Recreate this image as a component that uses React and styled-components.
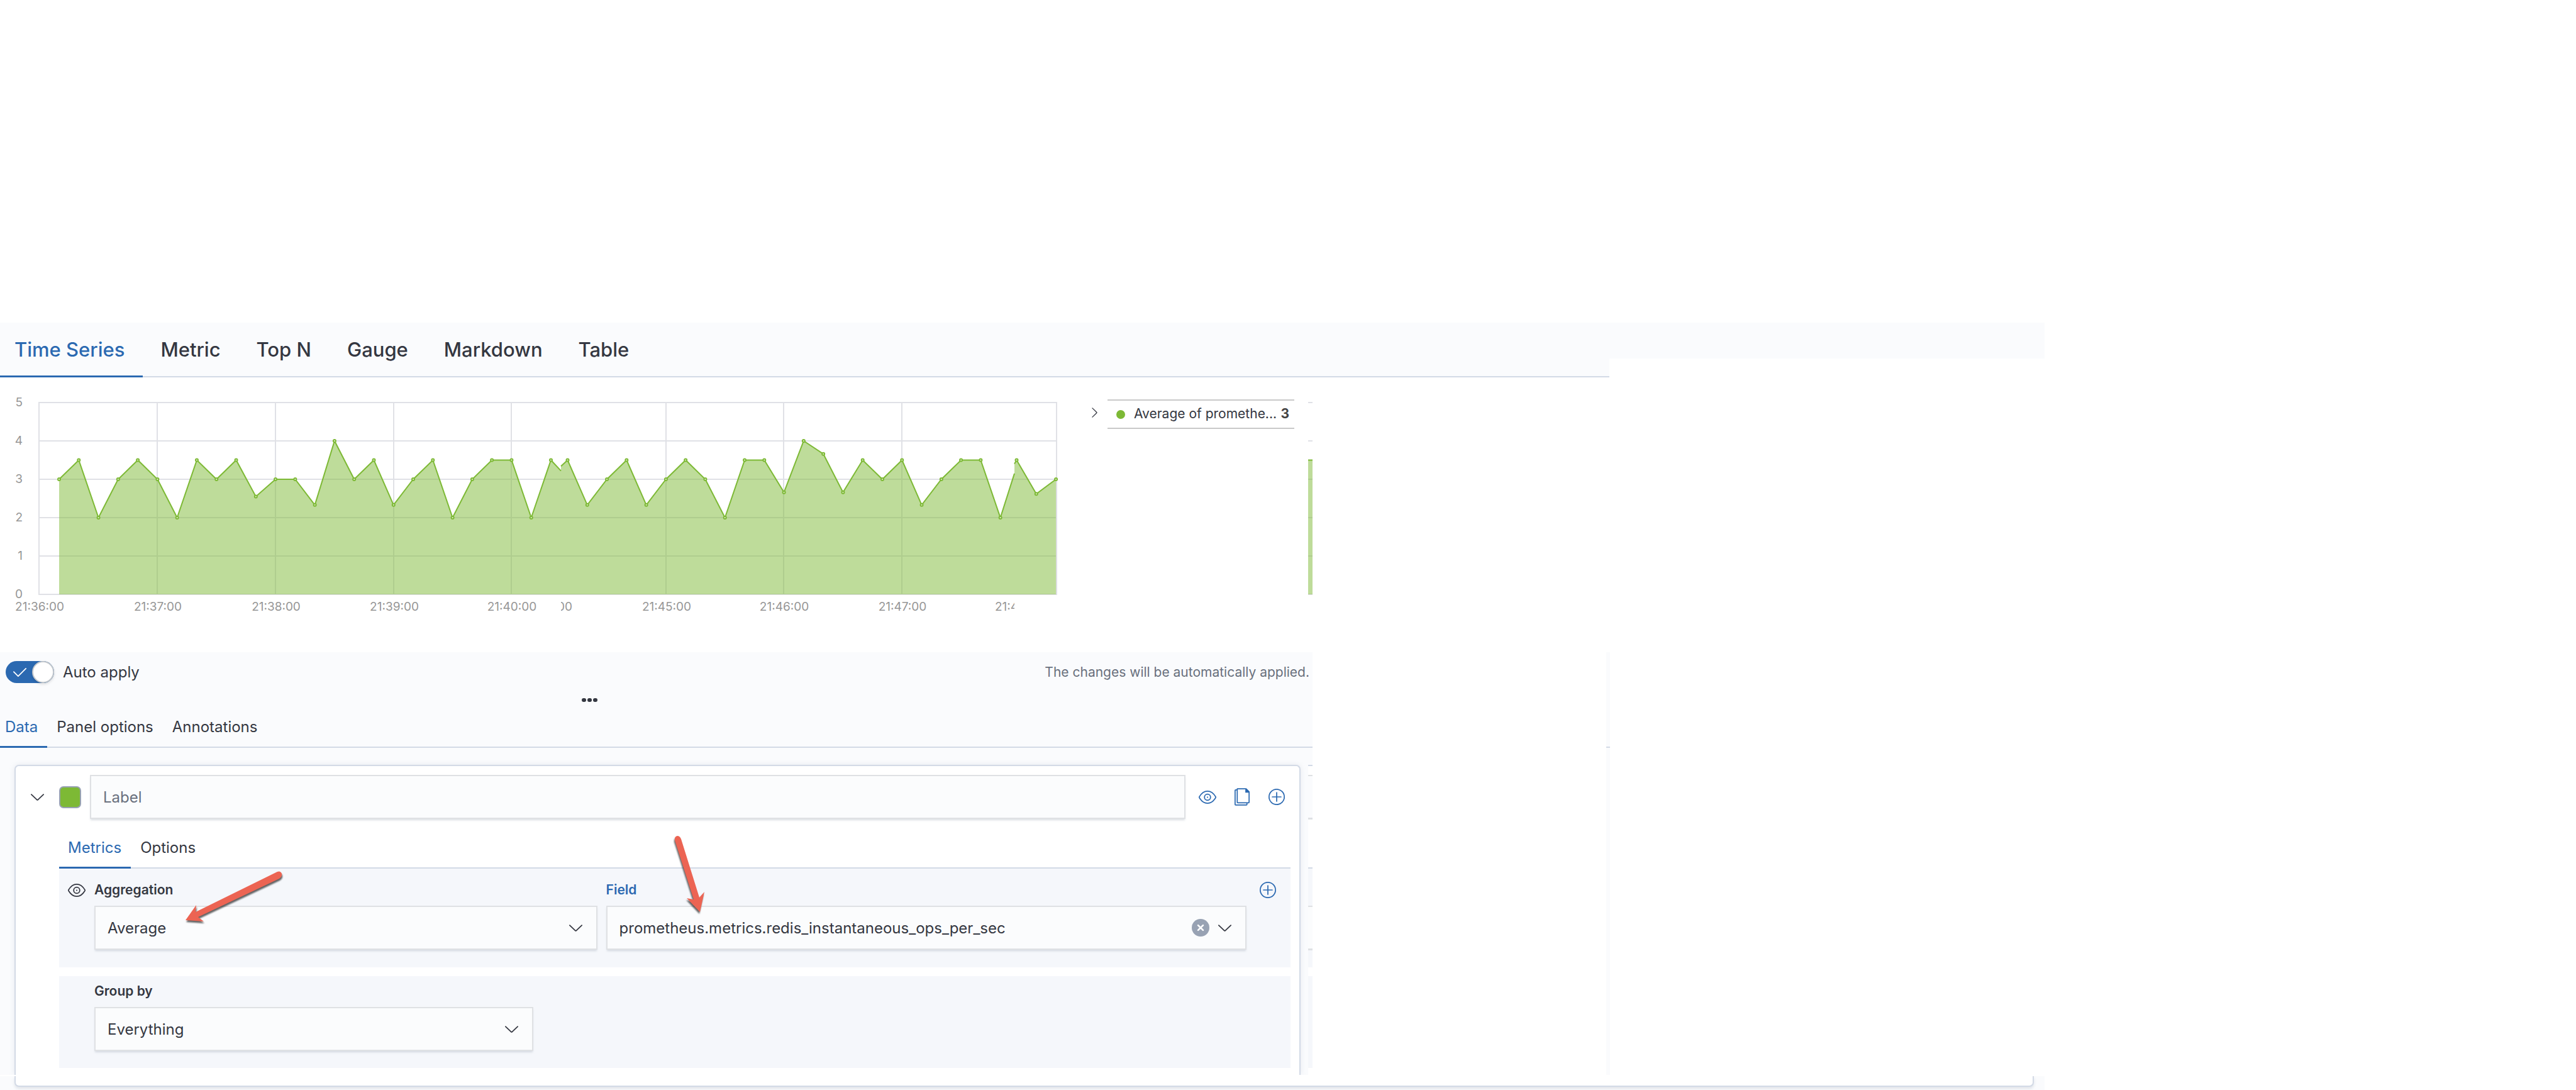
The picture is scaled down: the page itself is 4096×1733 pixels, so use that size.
import React, { useState } from "react";
import styled, { createGlobalStyle } from "styled-components";

const color = {
  primary: "#2b69b1",
  text: "#343741",
  subdued: "#69707d",
  border: "#d3dae6",
  control: "#dfe1e4",
  canvas: "#fafbfd",
  block: "#f5f7fb",
  green: "#7db935",
  tick: "#969696",
};

const GlobalStyle = createGlobalStyle`
  *, *::before, *::after { box-sizing: border-box; }
  html, body { margin: 0; background: #fff; }
  body, button, input, select {
    font-family: Inter, "Liberation Sans", sans-serif;
    color: ${color.text};
  }
  button { border: 0; padding: 0; margin: 0; background: none; cursor: pointer; }
`;

const Page = styled.main`
  display: flex;
  flex-direction: column;
  min-height: 100vh;
  padding-top: 513px;
  overflow: hidden;
`;

/* ---------- visualisation type tabs ---------- */

const Header = styled.header`
  display: grid;
  grid-template-columns: 2559fr 692fr 845fr;
`;

const HeaderTail = styled.div`
  height: 57px;
  background: ${color.canvas};
`;

const TabList = styled.div`
  display: flex;
  height: ${(p) => (p.$large ? 87 : 66)}px;
  background: ${(p) => (p.$plain ? "transparent" : color.canvas)};
  box-shadow: inset 0 -2px ${color.border};
`;

const Tab = styled.button`
  height: 100%;
  padding: ${(p) => (p.$large ? "0 29px 2px 28px" : "0 15px 2px")};
  font-size: ${(p) => (p.$large ? 31 : 24)}px;
  font-weight: ${(p) => (p.$large ? 500 : 400)};
  white-space: nowrap;
  color: ${(p) => (p.$active ? color.primary : color.text)};
  box-shadow: ${(p) => (p.$active ? `inset 0 -3px ${color.primary}` : "none")};

  &:first-child {
    padding-left: ${(p) => (p.$large ? 23 : p.$flush ? 8 : 14)}px;
  }
`;

function Tabs({ items, large, plain, flush, label }) {
  const [active, setActive] = useState(items[0]);
  return (
    <TabList role="tablist" aria-label={label} $large={large} $plain={plain}>
      {items.map((item) => (
        <Tab
          key={item}
          type="button"
          role="tab"
          aria-selected={item === active}
          $active={item === active}
          $large={large}
          $flush={flush}
          onClick={() => setActive(item)}
        >
          {item}
        </Tab>
      ))}
    </TabList>
  );
}

/* ---------- chart ---------- */

const Preview = styled.section`
  display: grid;
  grid-template-columns: 1700fr 380fr 7fr 2009fr;
  align-items: start;
`;

const ChartSvg = styled.svg`
  display: block;
  width: 100%;
  font-family: Inter, "Liberation Sans", sans-serif;
  font-size: 19px;
`;

const Sliver = styled.svg`
  display: block;
  width: 100%;
`;

const Legend = styled.div`
  display: flex;
  align-items: flex-start;
  gap: 12px;
  padding: 35px 22px 0 31px;
`;

const LegendToggle = styled.button`
  display: grid;
  place-items: center;
  width: 18px;
  height: 42px;
`;

const LegendItem = styled.button`
  display: flex;
  align-items: center;
  flex: 1;
  height: 47px;
  padding: 0 8px 3px 14px;
  border: solid #c9c9c9;
  border-width: 2px 0;
  font-size: 21px;
  text-align: left;
  white-space: nowrap;

  strong {
    margin-left: auto;
    font-weight: 700;
    color: #444;
  }
`;

const LegendDot = styled.i`
  width: 14px;
  height: 14px;
  margin: 4px 14px 0 0;
  border-radius: 50%;
  background: ${color.green};
`;

const BASE = 345;
const UNIT = 61;
const STEP = 31.28;
const yOf = (v) => BASE - v * UNIT;

const firstValues = [
  3, 3.5, 2, 3, 3.5, 3, 2, 3.5, 3, 3.5, 2.55, 3, 3, 2.33, 4, 3, 3.5, 2.33, 3,
  3.5, 2, 3, 3.5, 3.5, 2, 3.5,
];
const secondValues = [
  3.5, 2.33, 3, 3.5, 2.33, 3, 3.5, 3, 2, 3.5, 3.5, 2.66, 4, 3.66, 2.66, 3.5, 3,
  3.5, 2.33, 3, 3.5, 3.5, 2,
];
const thirdValues = [3.5, 2.62, 3];

const place = (values, x0) => values.map((v, i) => [x0 + i * STEP, v]);

const segments = [
  { points: place(firstValues, 94), tail: [892, 3.22] },
  { points: place(secondValues, 902.5), head: [892, 3.34], tail: [1613, 3.15] },
  { points: place(thirdValues, 1616.5), head: [1613, 3.4] },
];

const verticals = [250, 438, 626, 813, 1059, 1246, 1434];
const timeTicks = [
  [62, "21:36:00"],
  [250, "21:37:00"],
  [438, "21:38:00"],
  [626, "21:39:00"],
  [813, "21:40:00"],
  [1059, "21:45:00"],
  [1246, "21:46:00"],
  [1434, "21:47:00"],
];

function Segment({ points, head, tail }) {
  const all = [head, ...points, tail].filter(Boolean);
  const line = all.map(([x, v]) => `${x},${yOf(v)}`).join(" ");
  const first = all[0][0];
  const last = all[all.length - 1][0];
  return (
    <g>
      <polygon
        points={`${first},${BASE} ${line} ${last},${BASE}`}
        fill={color.green}
        fillOpacity="0.5"
      />
      <polyline points={line} fill="none" stroke={color.green} strokeWidth="2" />
      {points.map(([x, v]) => (
        <circle
          key={x}
          cx={x}
          cy={yOf(v)}
          r="2"
          fill="#e4f1d4"
          stroke={color.green}
          strokeWidth="2"
        />
      ))}
    </g>
  );
}

function Chart() {
  return (
    <ChartSvg viewBox="0 0 1700 437" role="img" aria-label="Time series">
      <defs>
        <clipPath id="after-first">
          <rect x="892" y="350" width="100" height="40" />
        </clipPath>
        <clipPath id="before-last">
          <rect x="1500" y="350" width="113" height="40" />
        </clipPath>
      </defs>
      <g stroke="#e0e1e6" strokeWidth="2">
        {[0, 1, 2, 3, 4, 5].map((v) => (
          <line key={v} x1="61" x2="1681" y1={yOf(v)} y2={yOf(v)} />
        ))}
        {[62, ...verticals, 1680].map((x) => (
          <line key={x} x1={x} x2={x} y1={yOf(5)} y2={BASE} />
        ))}
      </g>
      {segments.map((s, i) => (
        <Segment key={i} {...s} />
      ))}
      <g fill={color.tick} textAnchor="end">
        {[0, 1, 2, 3, 4, 5].map((v) => (
          <text key={v} x="36" y={yOf(v) + 6}>
            {v}
          </text>
        ))}
      </g>
      <g fill={color.tick} textAnchor="middle">
        {timeTicks.map(([x, t]) => (
          <text key={t} x={x + 1} y="371">
            {t}
          </text>
        ))}
      </g>
      <g fill={color.tick}>
        <text x="910" y="371" textAnchor="end" clipPath="url(#after-first)">
          00
        </text>
        <text x="1582" y="371" clipPath="url(#before-last)">
          21:48
        </text>
      </g>
    </ChartSvg>
  );
}

function ChartSliver() {
  return (
    <Sliver viewBox="0 0 7 437" aria-hidden="true">
      <g stroke="#e0e1e6" strokeWidth="2">
        {[0, 1, 2, 3, 4, 5].map((v) => (
          <line key={v} x1="0" x2="7" y1={yOf(v)} y2={yOf(v)} />
        ))}
      </g>
      <rect
        width="7"
        y={yOf(3.5)}
        height={3.5 * UNIT}
        fill={color.green}
        fillOpacity="0.5"
      />
      <rect width="7" y={yOf(3.5) - 1} height="2" fill={color.green} />
    </Sliver>
  );
}

/* ---------- icons ---------- */

const Svg = styled.svg`
  display: block;
  fill: none;
  stroke: currentColor;
  stroke-width: 2;
  stroke-linecap: round;
  stroke-linejoin: round;
`;

const ChevronDown = () => (
  <Svg width="21" height="11" viewBox="0 0 24 12">
    <path d="M1 1l10.2 9.6q.8.7 1.6 0L23 1" />
  </Svg>
);

const ChevronRight = () => (
  <Svg width="9" height="16" viewBox="0 0 10 18">
    <path d="M1 1l7.600 7.400q.6.600 0 1.200L1 17" strokeWidth="1.5" />
  </Svg>
);

const Eye = () => (
  <Svg width="28" height="21" viewBox="0 0 32 24">
    <path d="M1.200 11.200C5 4.800 10 1 16 1s11 3.800 14.800 10.200q.4.800 0 1.600C27 19.200 22 23 16 23S5 19.200 1.200 12.800q-.4-.8 0-1.600z" />
    <circle cx="16" cy="12" r="5.500" />
    <circle cx="16" cy="12" r="1.200" fill="currentColor" stroke="none" />
  </Svg>
);

const Copy = () => (
  <Svg width="24" height="28" viewBox="0 0 28 32">
    <path d="M5 1h16.500L27 6.500V26q0 1-1 1H6q-1 0-1-1z" />
    <path d="M20 1v7h7l-.5-2L22 1z" fill="currentColor" stroke="none" />
    <path d="M4 3H2Q1 3 1 4v26q0 1 1 1h20q1 0 1-1v-2" />
  </Svg>
);

const PlusCircle = () => (
  <Svg width="26" height="26" viewBox="0 0 30 30">
    <circle cx="15" cy="15" r="14" />
    <path d="M7 15h16M15 7v16" />
  </Svg>
);

const Cross = () => (
  <Svg width="28" height="28" viewBox="0 0 32 32">
    <circle cx="16" cy="16" r="16" fill="#98a2b3" stroke="none" />
    <path d="M11.500 11.500l9 9M20.500 11.500l-9 9" stroke="#fff" strokeWidth="3" />
  </Svg>
);

/* ---------- editor ---------- */

const Body = styled.section`
  display: grid;
  grid-template-columns: 2087fr 467fr 6fr 1536fr;
`;

const Editor = styled.div`
  min-width: 0;
  background: ${color.canvas};
`;

const EdgeLine = styled.div`
  background: linear-gradient(${color.border}, ${color.border}) 0 150px / 100% 2px
    no-repeat ${color.canvas};
`;

const Toolbar = styled.div`
  display: flex;
  align-items: center;
  justify-content: space-between;
  padding: 14px 5px 0 9px;
`;

const Switch = styled.label`
  display: flex;
  align-items: center;
  gap: 14px;
  height: 35px;
  font-size: 24px;
  cursor: pointer;
`;

const SwitchInput = styled.input`
  appearance: none;
  width: 77px;
  height: 35px;
  margin: 0;
  border-radius: 18px;
  background: #98a2b3;
  cursor: pointer;
  grid-area: 1 / 1;

  &:checked {
    background: ${color.primary};
  }
`;

const SwitchTrack = styled.span`
  display: grid;
  align-items: center;
`;

const SwitchFace = styled.span`
  grid-area: 1 / 1;
  display: flex;
  align-items: center;
  justify-content: space-between;
  padding-left: 12px;
  color: #fff;
  pointer-events: none;

  i {
    width: 35px;
    height: 35px;
    border: 2px solid #c5c9cd;
    border-radius: 50%;
    background: #fff;
    box-shadow: 0 2px 4px rgba(0, 0, 0, 0.12);
  }
`;

const Note = styled.span`
  font-size: 21px;
  color: ${color.subdued};
`;

const ResizeRow = styled.div`
  margin: 24px 0 7px;
  padding-left: 44.3%;
`;

const ResizeHandle = styled.button`
  display: flex;
  gap: 2px;

  i {
    width: 7px;
    height: 6px;
    border-radius: 3px;
    background: ${color.text};
  }
`;

const Series = styled.div`
  display: flex;
  gap: 12px;
  padding: 27px 0 0 23px;
`;

const Panel = styled.div`
  position: relative;
  flex: 1;
  min-width: 0;
  padding: 14px 0 11px;
  border: 2px solid ${color.border};
  border-bottom: 0;
  border-radius: 7px 7px 0 0;
  background: #fff;
  box-shadow: 0 0 8px rgba(152, 162, 179, 0.2);
  clip-path: inset(-12px -12px 0 -12px);
`;

const PanelEdge = styled.div`
  width: 7px;
  background: linear-gradient(
    ${color.border} 0 2px,
    #fff 2px 16px,
    ${color.control} 16px 18px,
    ${color.canvas} 18px 84px,
    ${color.control} 84px 87px,
    #fff 87px 163px,
    ${color.border} 163px 165px,
    ${color.block} 165px 224px,
    ${color.control} 224px 226px,
    #fbfcfd 226px 292px,
    ${color.control} 292px 295px,
    ${color.block} 295px 322px,
    #fff 322px 336px,
    ${color.block} 336px 482px,
    #fff 482px
  );
`;

const SeriesRow = styled.div`
  display: flex;
  align-items: center;
  padding: 0 22px 0 20px;
`;

const IconButton = styled.button`
  display: grid;
  flex: none;
  place-items: center;
  width: 28px;
  height: 28px;
  color: ${(p) => (p.$dark ? color.text : color.primary)};
`;

const Swatch = styled.button`
  flex: none;
  width: 35px;
  height: 35px;
  margin: 0 14px 0 21px;
  border: 2px solid #98a2b3;
  border-radius: 7px;
  background: ${color.green};
`;

const SeriesActions = styled.div`
  display: flex;
  gap: 27px;
  margin-left: 21px;
`;

const control = `
  width: 100%;
  height: 70px;
  margin: 0;
  padding: 0 19px;
  border: 2px solid ${color.control};
  border-radius: 0;
  outline: 0;
  background: #fbfcfd;
  box-shadow: 0 3px 3px -1px rgba(152, 162, 179, 0.35);
  font-size: 24px;
`;

const TextField = styled.input`
  ${control}
  flex: 1;
  min-width: 0;
  &::placeholder {
    color: ${color.subdued};
    opacity: 1;
  }
`;

const SelectControl = styled.select`
  ${control}
  appearance: none;
`;

const SelectBox = styled.div`
  position: relative;
`;

const SelectIcons = styled.div`
  position: absolute;
  inset: 0 24px 0 auto;
  display: flex;
  align-items: center;
  gap: 14px;
  pointer-events: none;

  button {
    pointer-events: auto;
  }
`;

const SeriesBody = styled.div`
  margin: 13px 14px 0 69px;
`;

const MetricBlock = styled.div`
  display: flex;
  align-items: flex-start;
  gap: 14px;
  padding: 22px 22px 28px 14px;
  background: ${color.block};
`;

const GroupBlock = styled.div`
  display: grid;
  grid-template-columns: 698fr 1204fr;
  margin-top: 14px;
  padding: 12px 0 27px 56px;
  background: ${color.block};
`;

const Field = styled.div`
  flex: ${(p) => p.$grow || 1} 1 0;
  min-width: 0;
`;

const FieldLabel = styled.label`
  display: block;
  margin-bottom: 13px;
  font-size: 21px;
  line-height: 24px;
  font-weight: 600;
  color: ${(p) => (p.$focus ? color.primary : color.text)};
`;

const AddMetric = styled(IconButton)`
  margin-left: 6px;
`;

const BlockIcon = styled.div`
  margin-top: -2px;
`;

const Pointer = styled.svg`
  position: absolute;
  left: ${(p) => p.$x}px;
  top: ${(p) => p.$y}px;
  overflow: visible;
  fill: #ec6453;
  filter: drop-shadow(${(p) => p.$shade}px 3px 1px rgba(0, 0, 0, 0.6));
  pointer-events: none;
`;

function SelectField({ id, label, value, grow, focus, clearable }) {
  return (
    <Field $grow={grow}>
      <FieldLabel htmlFor={id} $focus={focus}>
        {label}
      </FieldLabel>
      <SelectBox>
        <SelectControl id={id} defaultValue={value}>
          <option>{value}</option>
        </SelectControl>
        <SelectIcons>
          {clearable && (
            <IconButton type="button" aria-label="Clear">
              <Cross />
            </IconButton>
          )}
          <ChevronDown />
        </SelectIcons>
      </SelectBox>
    </Field>
  );
}

const Footer = styled.footer`
  display: grid;
  grid-template-columns: 3251fr 845fr;
  margin-top: 2px;
`;

const FooterBand = styled.div`
  height: 22px;
  padding: 0 17px 0 23px;
  background: ${color.canvas};
  overflow: hidden;
`;

const FooterPanel = styled.div`
  height: 17px;
  border: 2px solid ${color.border};
  border-top: 0;
  border-radius: 0 0 7px 7px;
  background: #fff;
  box-shadow: 0 3px 4px rgba(152, 162, 179, 0.25);
`;

export default function App() {
  const [auto, setAuto] = useState(true);
  return (
    <Page>
      <GlobalStyle />
      <Header>
        <Tabs
          large
          label="Visualization type"
          items={["Time Series", "Metric", "Top N", "Gauge", "Markdown", "Table"]}
        />
        <HeaderTail />
      </Header>

      <Preview>
        <Chart />
        <Legend>
          <LegendToggle type="button" aria-label="Toggle legend">
            <ChevronRight />
          </LegendToggle>
          <LegendItem type="button">
            <LegendDot />
            <span>Average of promethe...</span>
            <strong>3</strong>
          </LegendItem>
        </Legend>
        <ChartSliver />
      </Preview>

      <Body>
        <Editor>
          <Toolbar>
            <Switch>
              <SwitchTrack>
                <SwitchInput
                  type="checkbox"
                  role="switch"
                  checked={auto}
                  onChange={(e) => setAuto(e.target.checked)}
                />
                <SwitchFace>
                  <Svg width="21" height="14" viewBox="0 0 24 16">
                    <path d="M1 7l8 8L23 1" />
                  </Svg>
                  <i />
                </SwitchFace>
              </SwitchTrack>
              Auto apply
            </Switch>
            <Note>The changes will be automatically applied.</Note>
          </Toolbar>

          <ResizeRow>
            <ResizeHandle type="button" aria-label="Resize">
              <i />
              <i />
              <i />
            </ResizeHandle>
          </ResizeRow>

          <Tabs
            flush
            label="Editor sections"
            items={["Data", "Panel options", "Annotations"]}
          />

          <Series>
            <Panel>
              <SeriesRow>
                <IconButton type="button" $dark aria-label="Collapse">
                  <ChevronDown />
                </IconButton>
                <Swatch type="button" aria-label="Series color" />
                <TextField placeholder="Label" aria-label="Label" />
                <SeriesActions>
                  <IconButton type="button" aria-label="Hide series">
                    <Eye />
                  </IconButton>
                  <IconButton type="button" aria-label="Clone series">
                    <Copy />
                  </IconButton>
                  <IconButton type="button" aria-label="Add series">
                    <PlusCircle />
                  </IconButton>
                </SeriesActions>
              </SeriesRow>

              <SeriesBody>
                <Tabs plain label="Series sections" items={["Metrics", "Options"]} />
                <MetricBlock>
                  <BlockIcon>
                    <IconButton type="button" $dark aria-label="Hide metric">
                      <Eye />
                    </IconButton>
                  </BlockIcon>
                  <SelectField id="agg" label="Aggregation" value="Average" grow={800} />
                  <SelectField
                    id="field"
                    label="Field"
                    value="prometheus.metrics.redis_instantaneous_ops_per_sec"
                    grow={1019}
                    focus
                    clearable
                  />
                  <BlockIcon>
                    <AddMetric type="button" aria-label="Add metric">
                      <PlusCircle />
                    </AddMetric>
                  </BlockIcon>
                </MetricBlock>
                <GroupBlock>
                  <SelectField id="group" label="Group by" value="Everything" />
                </GroupBlock>
              </SeriesBody>

              <Pointer $x={270} $y={167} $shade={1} width="154" height="82" viewBox="0 0 154 82">
                <path d="M0 78L17 54L16 65L146 1Q151 -1 153 4Q154 9 149 12L20 73L29 80Z" />
              </Pointer>
              <Pointer $x={1048} $y={111} $shade={-1} width="48" height="122" viewBox="0 0 48 122">
                <path d="M40 121L19 99L30 101L0 7Q-1 1 4 0Q8 0 10 5L39 98L47 89Z" />
              </Pointer>
            </Panel>
            <PanelEdge />
          </Series>
        </Editor>
        <div />
        <EdgeLine />
      </Body>

      <Footer>
        <FooterBand>
          <FooterPanel />
        </FooterBand>
      </Footer>
    </Page>
  );
}
